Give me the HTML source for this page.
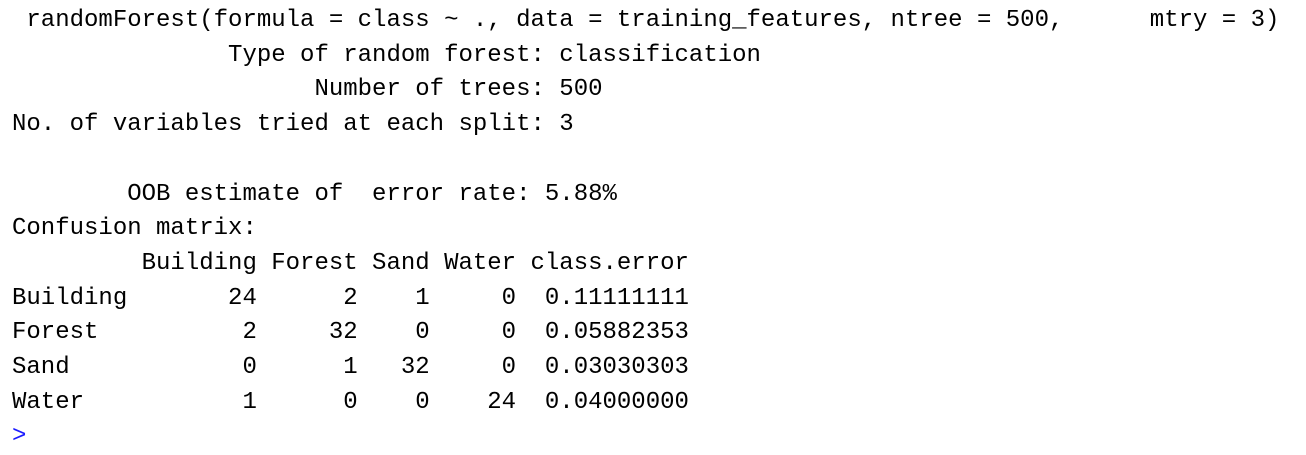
<!DOCTYPE html>
<html><head><meta charset="utf-8"><style>
html,body{margin:0;padding:0;background:#fff;width:1306px;height:436px;overflow:hidden}
pre{margin:0;position:absolute;left:12px;top:4px;font-family:"Liberation Mono","DejaVu Sans Mono",monospace;font-size:24px;line-height:34.7px;color:#000}
.b{color:#1a1aff}
</style></head><body>
<pre> randomForest(formula = class ~ ., data = training_features, ntree = 500,      mtry = 3) 
               Type of random forest: classification
                     Number of trees: 500
No. of variables tried at each split: 3

        OOB estimate of  error rate: 5.88%
Confusion matrix:
         Building Forest Sand Water class.error
Building       24      2    1     0  0.11111111
Forest          2     32    0     0  0.05882353
Sand            0      1   32     0  0.03030303
Water           1      0    0    24  0.04000000
<span class="b">&gt;</span></pre>
</body></html>
